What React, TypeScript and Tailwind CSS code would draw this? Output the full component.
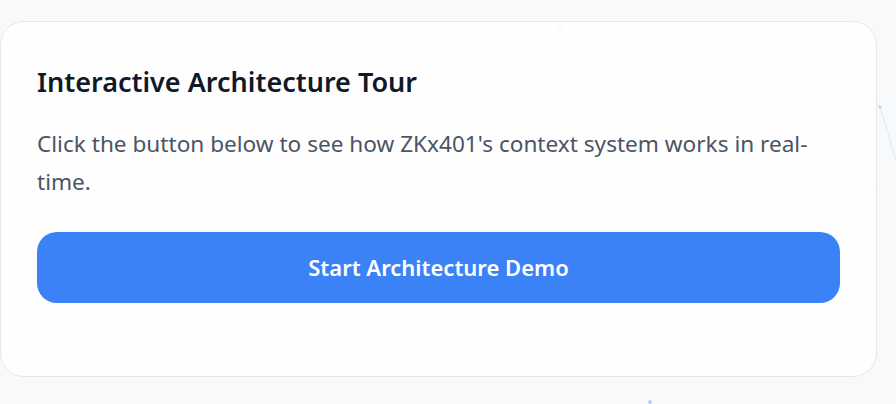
import React from 'react';

const NODES: [number, number, number][] = [
  [560, 28, 2.5],
  [570, 57, 1.5],
  [572, 80, 1.5],
  [871, 95, 1.5],
  [880, 107, 1.5],
  [808, 172, 1.5],
  [779, 173, 1.5],
  [873, 187, 1.5],
  [75, 228, 1.5],
  [274, 320, 1.5],
  [104, 375, 1.5],
  [650, 402, 2],
  [178, 40, 1],
];

const LINES: [number, number, number, number][] = [
  [560, 28, 570, 57],
  [570, 57, 572, 80],
  [871, 95, 880, 107],
  [871, 95, 808, 172],
  [808, 172, 779, 173],
  [808, 172, 873, 187],
  [880, 107, 896, 160],
  [15, 210, 75, 228],
  [75, 228, 25, 300],
  [25, 300, 104, 375],
  [178, 40, 220, 150],
  [220, 150, 160, 260],
];

export default function App() {
  return (
    <div className="relative w-[896px] h-[404px] overflow-hidden bg-[#f8f9fb] font-['Noto_Sans',sans-serif]">
      <svg className="absolute inset-0" width="896" height="404">
        {LINES.map(([x1, y1, x2, y2], i) => (
          <line key={i} x1={x1} y1={y1} x2={x2} y2={y2} stroke="#c7d7fb" strokeOpacity="0.5" strokeWidth="1" />
        ))}
        {NODES.map(([cx, cy, r], i) => (
          <circle key={i} cx={cx} cy={cy} r={r} fill="#a9c2f7" fillOpacity="0.8" />
        ))}
      </svg>

      <div className="relative mt-[21px] w-[877px] h-[356px] rounded-[24px] border border-gray-200 bg-white/90 px-9 pt-[42px]">
        <h3 className="text-[27px] leading-9 font-semibold text-[#111827]">Interactive Architecture Tour</h3>
        <p className="mt-[25px] text-[22.6px] leading-[38px] text-[#4b5563]">
          Click the button below to see how ZKx401's context system works in real-time.
        </p>
        <button className="mt-[31px] w-full h-[71px] rounded-[20px] bg-[#3b82f6] text-white text-[22px] font-semibold">
          Start Architecture Demo
        </button>
      </div>
    </div>
  );
}
